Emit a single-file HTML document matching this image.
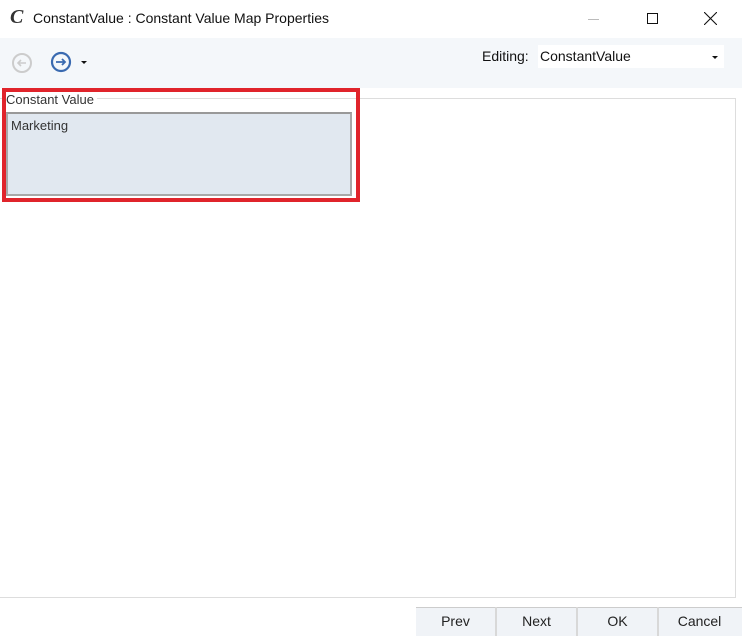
<!DOCTYPE html>
<html><head><meta charset="utf-8"><style>
*{margin:0;padding:0;box-sizing:border-box}
body{width:742px;height:636px;background:#fff;position:relative;overflow:hidden;font-family:"Liberation Sans",sans-serif;}
.a{position:absolute}
</style></head><body>
<div class="a" style="left:10px;top:6px;font:italic bold 20px 'Liberation Serif',serif;color:#333">C</div>
<div class="a" style="left:33px;top:10px;font-size:14px;color:#111">ConstantValue : Constant Value Map Properties</div>
<div class="a" style="left:588px;top:19px;width:11px;height:1px;background:#bbb"></div>
<div class="a" style="left:647px;top:13px;width:11px;height:11px;border:1px solid #111"></div>
<svg class="a" style="left:704px;top:12px" width="13" height="13"><path d="M0 0L13 13M13 0L0 13" stroke="#111" stroke-width="1.1"/></svg>
<div class="a" style="left:0;top:38px;width:742px;height:50px;background:#f4f7fa"></div>
<svg class="a" style="left:11px;top:52px" width="22" height="22"><circle cx="11" cy="11" r="9" fill="none" stroke="#ccc" stroke-width="2"/><path d="M15 11H7M10 8L7 11L10 14" fill="none" stroke="#ccc" stroke-width="1.6"/></svg>
<svg class="a" style="left:50px;top:51px" width="22" height="22"><circle cx="11" cy="11" r="9" fill="none" stroke="#3a6ab0" stroke-width="2.2"/><path d="M6 11H15M12 8L15 11L12 14" fill="none" stroke="#3a6ab0" stroke-width="1.8"/></svg>
<div class="a" style="left:81px;top:61px;border-left:3px solid transparent;border-right:3px solid transparent;border-top:3px solid #111"></div>
<div class="a" style="left:482px;top:48px;font-size:14px;color:#111">Editing:</div>
<div class="a" style="left:538px;top:45px;width:186px;height:23px;background:#fff"></div>
<div class="a" style="left:540px;top:48px;font-size:14px;color:#111">ConstantValue</div>
<div class="a" style="left:712px;top:56px;border-left:3px solid transparent;border-right:3px solid transparent;border-top:3px solid #111"></div>
<div class="a" style="left:0;top:98px;width:736px;height:500px;border:1px solid #ddd;border-left:none"></div>
<div class="a" style="left:6px;top:92px;font-size:13px;color:#333;background:#fff;padding-right:3px">Constant Value</div>
<div class="a" style="left:6px;top:112px;width:346px;height:84px;background:#e1e8f0;border:2px solid #a8a8a8;border-top-color:#999"></div>
<div class="a" style="left:11px;top:118px;font-size:13px;color:#333">Marketing</div>
<div class="a" style="left:2px;top:88px;width:358px;height:114px;border:4px solid #e0242b"></div>
<div class="a" style="left:416px;top:607px;width:326px;height:29px;background:#f0f3f7;border-top:1px solid #ccc"></div>
<div class="a" style="left:416px;top:607px;width:81px;height:29px;border-right:2px solid #d8d8d8;text-align:center;line-height:29px;font-size:14px;color:#222">Prev</div>
<div class="a" style="left:497px;top:607px;width:81px;height:29px;border-right:2px solid #d8d8d8;text-align:center;line-height:29px;font-size:14px;color:#222">Next</div>
<div class="a" style="left:578px;top:607px;width:81px;height:29px;border-right:2px solid #d8d8d8;text-align:center;line-height:29px;font-size:14px;color:#222">OK</div>
<div class="a" style="left:659px;top:607px;width:81px;height:29px;text-align:center;line-height:29px;font-size:14px;color:#222">Cancel</div>
</body></html>
